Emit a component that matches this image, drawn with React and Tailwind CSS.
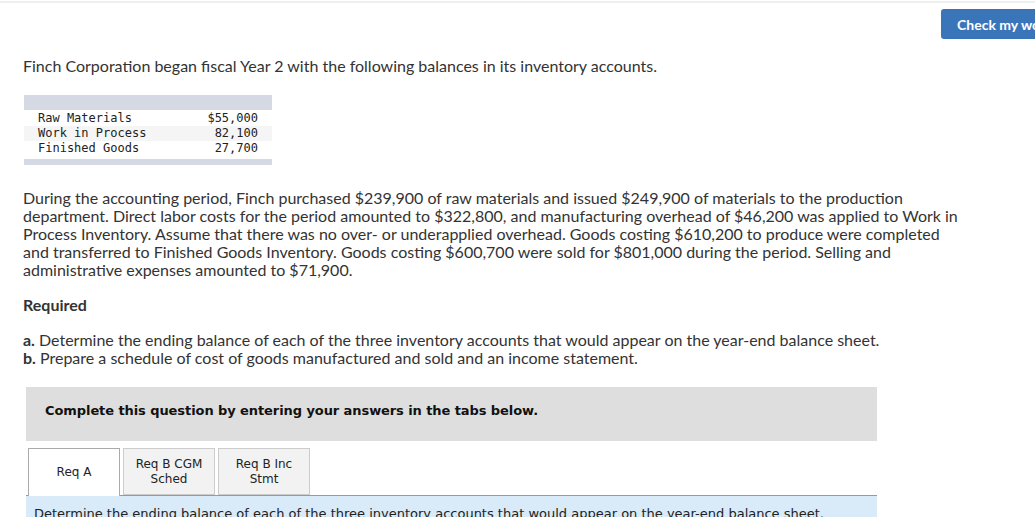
export default function App() {
  const sans = { fontFamily: '"Lato", "Open Sans", sans-serif' };
  return (
    <div className="relative w-[1035px] h-[517px] overflow-hidden bg-white text-[#333]" style={sans}>
      <div className="h-[2px] w-full bg-[#efefef] mt-[1px]" />
      <div className="flex justify-end pt-[6px]">
        <button className="h-[30px] w-[110px] -mr-[16px] rounded-[3px] bg-[#3a75ba] text-white text-[14px] font-bold text-left pl-[16px] whitespace-nowrap">
          Check my work
        </button>
      </div>
      <div className="pl-[23px] pt-[18px]">
        <p className="text-[16px] leading-[18px]">
          Finch Corporation began fiscal Year 2 with the following balances in its inventory accounts.
        </p>
        <div className="mt-[20px] ml-[1px] w-[248px] text-[12px] leading-[15px] text-[#222]" style={{ fontFamily: '"DejaVu Sans Mono", monospace' }}>
          <div className="h-[15px] bg-[#d5d9e3]" />
          <div className="flex justify-between px-[14px] pt-[1px] h-[16px]"><span>Raw Materials</span><span>$55,000</span></div>
          <div className="flex justify-between px-[14px] h-[15px] bg-[#f5f5f5]"><span>Work in Process</span><span>82,100</span></div>
          <div className="flex justify-between px-[14px] h-[15px]"><span>Finished Goods</span><span>27,700</span></div>
          <div className="h-[6px] mt-[3px] bg-[#d5d9e3]" />
        </div>
        <p className="mt-[24px] text-[16px] leading-[18px]">
          During the accounting period, Finch purchased $239,900 of raw materials and issued $249,900 of materials to the production<br />
          department. Direct labor costs for the period amounted to $322,800, and manufacturing overhead of $46,200 was applied to Work in<br />
          Process Inventory. Assume that there was no over- or underapplied overhead. Goods costing $610,200 to produce were completed<br />
          and transferred to Finished Goods Inventory. Goods costing $600,700 were sold for $801,000 during the period. Selling and<br />
          administrative expenses amounted to $71,900.
        </p>
        <p className="mt-[17px] text-[16px] leading-[18px] font-bold">Required</p>
        <p className="mt-[17px] text-[16px] leading-[18px]">
          <b>a.</b> Determine the ending balance of each of the three inventory accounts that would appear on the year-end balance sheet.<br />
          <b>b.</b> Prepare a schedule of cost of goods manufactured and sold and an income statement.
        </p>
      </div>
      <div className="ml-[26px] mt-[20px] w-[851px]" style={{ fontFamily: '"DejaVu Sans", Verdana, sans-serif' }}>
        <div className="h-[54px] bg-[#dedede] pt-[16px] pl-[19px] text-[13px] leading-[16px] font-bold text-[#111] tracking-[-0.08px]">
          Complete this question by entering your answers in the tabs below.
        </div>
        <div className="mt-[7px] flex gap-[3px] pl-[2px] h-[47px] text-[12px] leading-[15px] text-[#222]">
          <div className="w-[92px] border border-b-0 border-[#aaa] bg-white flex items-center justify-center relative z-10 h-[48px]">Req A</div>
          <div className="w-[92px] border border-[#ccc] bg-[#f2f2f2] flex items-center justify-center text-center">Req B CGM<br />Sched</div>
          <div className="w-[92px] border border-[#ccc] bg-[#f2f2f2] flex items-center justify-center text-center">Req B Inc<br />Stmt</div>
        </div>
        <div className="border-t border-[#999] bg-[#d9ebf9] h-[40px] pl-[8px] pt-[8px] text-[13px] text-[#222] whitespace-nowrap">
          Determine the ending balance of each of the three inventory accounts that would appear on the year-end balance sheet.
        </div>
      </div>
    </div>
  );
}
